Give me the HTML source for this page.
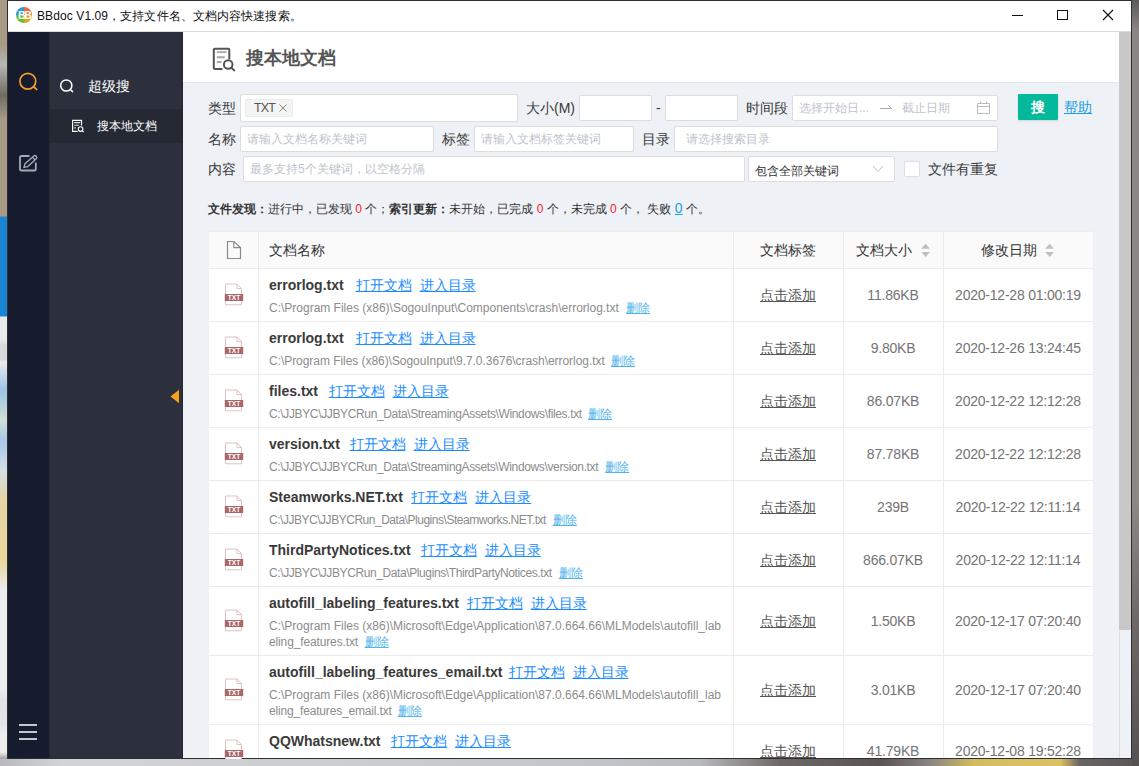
<!DOCTYPE html>
<html><head><meta charset="utf-8">
<style>
*{box-sizing:border-box;margin:0;padding:0}
html,body{width:1139px;height:766px;overflow:hidden}
body{position:relative;font-family:"Liberation Sans",sans-serif;color:#333;background:#8a8582}
.a{position:absolute}
.nw{white-space:nowrap}
/* desktop */
#dl{left:0;top:0;width:7px;height:766px;background:linear-gradient(180deg,#a89a87 0,#a89a87 45px,#b4b6b4 65px,#6f6d62 95px,#a89a87 120px,#a89a87 216px,#1a85d5 217px,#1a85d5 316px,#e8e9eb 317px,#e8e9eb 340px,#d8d9db 345px,#d8d9db 360px,#e9eaec 362px,#9cc3e6 390px,#cfe0d6 420px,#a8c8e8 440px,#d6dee6 470px,#e3d6a4 500px,#e8d69a 560px,#ecedee 590px,#ecedee 690px,#dfe3e8 700px,#e2e5e8 725px,#eeeeef 735px,#eeeeef 752px,#a9a9ab 758px,#9a9a9c 766px)}
#db{left:0;top:759px;width:1139px;height:7px;background:linear-gradient(90deg,#b9b9bd 0,#d2d3d7 60px,#cdced2 330px,#c2c4c9 600px,#b8b9bc 700px,#6d6865 780px,#5a5454 880px,#8a8482 930px,#d3be5e 975px,#d9c264 1060px,#6a6464 1080px,#5a5656 1139px)}
#dr{left:1132px;top:0;width:7px;height:766px;background:linear-gradient(180deg,#5d5a5c 0,#8b8583 30px,#8e8885 500px,#6e6866 620px,#575252 766px)}
/* window */
#win{left:7px;top:0;width:1125px;height:759px;background:#fff;border:1px solid #2f2f2f}
#title{left:8px;top:1px;width:1123px;height:31px;background:#fff;border-bottom:1px solid #dcdcdc}
#nav{left:8px;top:32px;width:40px;height:726px;background:#161b2e}
#side{left:48px;top:32px;width:135px;height:726px;background:linear-gradient(90deg,#1b1c24 0,#1b1c24 1px,#262830 1px,#262830 2px,#2b303c 2px,#2b303c 134px,#212431 134px)}
#main{left:183px;top:32px;width:936px;height:726px;background:#eef1f5}
#head{left:183px;top:32px;width:936px;height:50px;background:#fff}
#sb{left:1119px;top:32px;width:12px;height:726px;background:#eef1f5;border-left:1px solid #dedede}
#thumb{left:1119px;top:32px;width:12px;height:598px;background:#c8c8c8}
.lbl{font-size:14px;color:#3a3a3a;line-height:20px}
.inp{background:#fff;border:1px solid #dddddd;border-radius:2px}
.ph{font-size:12px;color:#c0c4cc;line-height:16px}
/* table */
#tbl{left:209px;top:232px;width:884px;height:526px;background:#fff}
.th{background:#fafafa}
.hl{height:1px;background:#ebebeb}
.vl{width:1px;background:#ebebeb}
.nm{font-size:14px;font-weight:bold;color:#3a3a3a;line-height:20px}
.lk{font-size:14px;color:#1a8cff;text-decoration:underline;line-height:20px}
.pt{font-size:12px;color:#8c8c8c;line-height:16px}
.del{color:#4db3ec;text-decoration:underline}
.tg{font-size:14px;color:#555;text-decoration:underline;line-height:20px;text-align:center;width:110px}
.sz{font-size:14px;letter-spacing:-0.2px;color:#747474;line-height:20px;text-align:center;width:100px}
.dt{font-size:14px;letter-spacing:-0.22px;color:#747474;line-height:20px;text-align:center;width:150px}
</style></head><body>
<div class="a" id="win"></div>
<div class="a" id="title"></div>
<div class="a" id="nav"></div>
<div class="a" id="side"></div>
<div class="a" id="main"></div>
<div class="a" id="head"></div>
<div class="a" style="left:183px;top:82px;width:936px;height:1px;background:#e5e8ec"></div>
<div class="a" id="sb"></div>
<div class="a" id="thumb"></div>

<!-- title bar -->
<svg class="a" style="left:15px;top:6px" width="18" height="18" viewBox="0 0 18 18">
 <path d="M9 9 L9 1 A8 8 0 0 0 1 9 Z" fill="#2d9bd2"/>
 <path d="M9 9 L17 9 A8 8 0 0 0 9 1 Z" fill="#f0673a"/>
 <path d="M9 9 L1 9 A8 8 0 0 0 9 17 Z" fill="#66c22e"/>
 <path d="M9 9 L9 17 A8 8 0 0 0 17 9 Z" fill="#dea21f"/>
 <text x="9.3" y="13" font-family="Liberation Sans" font-weight="bold" font-size="10.5" fill="#fff" text-anchor="middle" letter-spacing="-1.4">BB</text>
</svg>
<div class="a nw" style="left:37px;top:7px;font-size:12px;line-height:18px;color:#111;letter-spacing:0.1px">BBdoc V1.09，支持文件名、文档内容快速搜索。</div>
<div class="a" style="left:1012px;top:15px;width:11px;height:1px;background:#111"></div>
<div class="a" style="left:1057px;top:10px;width:11px;height:10px;border:1px solid #111"></div>
<svg class="a" style="left:1102px;top:9px" width="12" height="12" viewBox="0 0 12 12"><path d="M1 1 L11 11 M11 1 L1 11" stroke="#111" stroke-width="1.1"/></svg>
<!-- nav icons -->
<svg class="a" style="left:17px;top:70px" width="24" height="24" viewBox="0 0 24 24">
 <circle cx="10.8" cy="11.2" r="7.9" fill="none" stroke="#f3a02a" stroke-width="1.7"/>
 <path d="M16.6 16.8 L19.6 19.4" stroke="#f3a02a" stroke-width="1.8" stroke-linecap="round"/>
</svg>
<svg class="a" style="left:17px;top:153px" width="22" height="22" viewBox="0 0 22 22">
 <path d="M12.5 3 H4.6 Q3 3 3 4.6 V15.9 Q3 17.5 4.6 17.5 H17.2 Q18.8 17.5 18.8 15.9 V9.6" fill="none" stroke="#a7aab5" stroke-width="1.8"/>
 <g transform="translate(6.9 14.4) rotate(-42)"><path d="M0 0 L3.2 -1.9 H15 Q16.6 -1.9 16.6 0 Q16.6 1.9 15 1.9 H3.2 Z M13.2 -1.9 V1.9" fill="none" stroke="#a7aab5" stroke-width="1.4" stroke-linejoin="round"/></g>
</svg>
<div class="a" style="left:19px;top:724px;width:18px;height:2px;background:#c3c6cc"></div>
<div class="a" style="left:19px;top:731px;width:18px;height:2px;background:#c3c6cc"></div>
<div class="a" style="left:19px;top:738px;width:18px;height:2px;background:#c3c6cc"></div>
<!-- sidebar -->
<svg class="a" style="left:59px;top:78px" width="16" height="16" viewBox="0 0 16 16">
 <circle cx="7.3" cy="7.5" r="5.6" fill="none" stroke="#fff" stroke-width="1.5"/>
 <path d="M11.4 11.6 L13.6 13.6" stroke="#fff" stroke-width="1.5" stroke-linecap="round"/>
</svg>
<div class="a nw" style="left:88px;top:76px;font-size:14px;line-height:20px;color:#fff">超级搜</div>
<div class="a" style="left:50px;top:109px;width:132px;height:34px;background:#252933"></div>
<svg class="a" style="left:71px;top:118px" width="16" height="17" viewBox="0 0 16 17">
 <path d="M10.5 7.6 V2.3 H1.6 V13.4 H6.6" fill="none" stroke="#fff" stroke-width="1.2"/>
 <path d="M3.2 4.6 H9 M3.2 7.3 H8 M3.2 9.9 H5" stroke="#ddd" stroke-width="1.1"/>
 <circle cx="9.6" cy="11.1" r="2.3" fill="none" stroke="#fff" stroke-width="1.1"/>
 <path d="M11.3 12.8 L12.8 14.2" stroke="#fff" stroke-width="1.1"/>
</svg>
<div class="a nw" style="left:97px;top:118px;font-size:12px;line-height:16px;color:#fff">搜本地文档</div>
<svg class="a" style="left:169px;top:389px" width="11" height="15" viewBox="0 0 11 15"><path d="M1.5 7.5 L10 0.8 V14.2 Z" fill="#f8a01a"/></svg>
<!-- header -->
<svg class="a" style="left:211px;top:46px" width="26" height="26" viewBox="0 0 26 26">
 <path d="M18.3 13.2 V3.8 Q18.3 2.8 17.3 2.8 H3.8 Q2.8 2.8 2.8 3.8 V21.9 Q2.8 22.9 3.8 22.9 H11.5" fill="none" stroke="#555" stroke-width="2"/>
 <path d="M5.8 6.1 H15.6 M5.8 11.2 H13.8 M5.8 16 H10.6" stroke="#a8a8a8" stroke-width="1.9"/>
 <circle cx="17.2" cy="18.5" r="4.3" fill="none" stroke="#555" stroke-width="2"/>
 <path d="M20.4 21.7 L23.3 24.4" stroke="#555" stroke-width="2" stroke-linecap="round"/>
</svg>
<div class="a nw" style="left:246px;top:45px;font-size:18px;line-height:26px;font-weight:bold;color:#555">搜本地文档</div>

<div class="a" id="tbl"></div>
<!-- TABLE -->
<div class="a th" style="left:208px;top:231px;width:885px;height:37px;border-top:1px solid #ededed;border-left:1px solid #f0f0f0"></div>
<svg class="a" style="left:226px;top:240px" width="16" height="20" viewBox="0 0 16 20"><path d="M1.5 1.5 H7.8 L14.5 7.6 V18.5 H1.5 Z" fill="none" stroke="#8a8a8a" stroke-width="1.2"/><path d="M7.8 1.5 V7.6 H14.5" fill="none" stroke="#8a8a8a" stroke-width="1.1"/></svg>
<div class="a nw" style="left:269px;top:240px;font-size:14px;line-height:20px;color:#333">文档名称</div>
<div class="a nw" style="left:733px;top:240px;width:110px;text-align:center;font-size:14px;line-height:20px;color:#333">文档标签</div>
<div class="a nw" style="left:856px;top:240px;font-size:14px;line-height:20px;color:#333">文档大小</div>
<div class="a nw" style="left:981px;top:240px;font-size:14px;line-height:20px;color:#333">修改日期</div>
<svg class="a" style="left:921px;top:243px" width="10" height="15" viewBox="0 0 10 15"><path d="M0.2 5.8 L4.6 0.8 L9 5.8 Z M0.2 9 L4.6 14 L9 9 Z" fill="#bfbfbf"/></svg>
<svg class="a" style="left:1045px;top:243px" width="10" height="15" viewBox="0 0 10 15"><path d="M0.2 5.8 L4.6 0.8 L9 5.8 Z M0.2 9 L4.6 14 L9 9 Z" fill="#bfbfbf"/></svg>
<div class="a hl" style="left:209px;top:268px;width:884px"></div>
<svg class="a" style="left:224px;top:283px" width="20" height="23" viewBox="0 0 20 23"><path d="M1.5 1 H13 L17.5 5.6 V21.8 H1.5 Z" fill="#fff" stroke="#e0c2c2" stroke-width="1"/><path d="M13 1 V5.6 H17.5" fill="none" stroke="#e0c2c2" stroke-width="1"/><rect x="0.8" y="11" width="18.4" height="7" fill="#a9676a"/><text x="10" y="17.1" font-family="Liberation Sans" font-weight="bold" font-size="6.6" fill="#fff" text-anchor="middle">TXT</text></svg>
<div class="a nw nm" style="left:269px;top:275px">errorlog.txt</div>
<div class="a nw lk" style="left:355.6px;top:275px">打开文档</div>
<div class="a nw lk" style="left:419.6px;top:275px">进入目录</div>
<div class="a nw pt" style="left:269px;top:300px;letter-spacing:-0.006px">C:\Program Files (x86)\SogouInput\Components\crash\errorlog.txt</div>
<div class="a nw pt del" style="left:626.0px;top:300px">删除</div>
<div class="a nw tg" style="left:733px;top:285px">点击添加</div>
<div class="a nw sz" style="left:843px;top:285px">11.86KB</div>
<div class="a nw dt" style="left:943px;top:285px">2020-12-28 01:00:19</div>
<div class="a hl" style="left:209px;top:321px;width:884px"></div>
<svg class="a" style="left:224px;top:336px" width="20" height="23" viewBox="0 0 20 23"><path d="M1.5 1 H13 L17.5 5.6 V21.8 H1.5 Z" fill="#fff" stroke="#e0c2c2" stroke-width="1"/><path d="M13 1 V5.6 H17.5" fill="none" stroke="#e0c2c2" stroke-width="1"/><rect x="0.8" y="11" width="18.4" height="7" fill="#a9676a"/><text x="10" y="17.1" font-family="Liberation Sans" font-weight="bold" font-size="6.6" fill="#fff" text-anchor="middle">TXT</text></svg>
<div class="a nw nm" style="left:269px;top:328px">errorlog.txt</div>
<div class="a nw lk" style="left:355.6px;top:328px">打开文档</div>
<div class="a nw lk" style="left:419.6px;top:328px">进入目录</div>
<div class="a nw pt" style="left:269px;top:353px;letter-spacing:-0.050px">C:\Program Files (x86)\SogouInput\9.7.0.3676\crash\errorlog.txt</div>
<div class="a nw pt del" style="left:611.0px;top:353px">删除</div>
<div class="a nw tg" style="left:733px;top:338px">点击添加</div>
<div class="a nw sz" style="left:843px;top:338px">9.80KB</div>
<div class="a nw dt" style="left:943px;top:338px">2020-12-26 13:24:45</div>
<div class="a hl" style="left:209px;top:374px;width:884px"></div>
<svg class="a" style="left:224px;top:389px" width="20" height="23" viewBox="0 0 20 23"><path d="M1.5 1 H13 L17.5 5.6 V21.8 H1.5 Z" fill="#fff" stroke="#e0c2c2" stroke-width="1"/><path d="M13 1 V5.6 H17.5" fill="none" stroke="#e0c2c2" stroke-width="1"/><rect x="0.8" y="11" width="18.4" height="7" fill="#a9676a"/><text x="10" y="17.1" font-family="Liberation Sans" font-weight="bold" font-size="6.6" fill="#fff" text-anchor="middle">TXT</text></svg>
<div class="a nw nm" style="left:269px;top:381px">files.txt</div>
<div class="a nw lk" style="left:328.6px;top:381px">打开文档</div>
<div class="a nw lk" style="left:392.6px;top:381px">进入目录</div>
<div class="a nw pt" style="left:269px;top:406px;letter-spacing:-0.357px">C:\JJBYC\JJBYCRun_Data\StreamingAssets\Windows\files.txt</div>
<div class="a nw pt del" style="left:588.1px;top:406px">删除</div>
<div class="a nw tg" style="left:733px;top:391px">点击添加</div>
<div class="a nw sz" style="left:843px;top:391px">86.07KB</div>
<div class="a nw dt" style="left:943px;top:391px">2020-12-22 12:12:28</div>
<div class="a hl" style="left:209px;top:427px;width:884px"></div>
<svg class="a" style="left:224px;top:442px" width="20" height="23" viewBox="0 0 20 23"><path d="M1.5 1 H13 L17.5 5.6 V21.8 H1.5 Z" fill="#fff" stroke="#e0c2c2" stroke-width="1"/><path d="M13 1 V5.6 H17.5" fill="none" stroke="#e0c2c2" stroke-width="1"/><rect x="0.8" y="11" width="18.4" height="7" fill="#a9676a"/><text x="10" y="17.1" font-family="Liberation Sans" font-weight="bold" font-size="6.6" fill="#fff" text-anchor="middle">TXT</text></svg>
<div class="a nw nm" style="left:269px;top:434px">version.txt</div>
<div class="a nw lk" style="left:349.5px;top:434px">打开文档</div>
<div class="a nw lk" style="left:413.5px;top:434px">进入目录</div>
<div class="a nw pt" style="left:269px;top:459px;letter-spacing:-0.361px">C:\JJBYC\JJBYCRun_Data\StreamingAssets\Windows\version.txt</div>
<div class="a nw pt del" style="left:605.3px;top:459px">删除</div>
<div class="a nw tg" style="left:733px;top:444px">点击添加</div>
<div class="a nw sz" style="left:843px;top:444px">87.78KB</div>
<div class="a nw dt" style="left:943px;top:444px">2020-12-22 12:12:28</div>
<div class="a hl" style="left:209px;top:480px;width:884px"></div>
<svg class="a" style="left:224px;top:495px" width="20" height="23" viewBox="0 0 20 23"><path d="M1.5 1 H13 L17.5 5.6 V21.8 H1.5 Z" fill="#fff" stroke="#e0c2c2" stroke-width="1"/><path d="M13 1 V5.6 H17.5" fill="none" stroke="#e0c2c2" stroke-width="1"/><rect x="0.8" y="11" width="18.4" height="7" fill="#a9676a"/><text x="10" y="17.1" font-family="Liberation Sans" font-weight="bold" font-size="6.6" fill="#fff" text-anchor="middle">TXT</text></svg>
<div class="a nw nm" style="left:269px;top:487px">Steamworks.NET.txt</div>
<div class="a nw lk" style="left:411.2px;top:487px">打开文档</div>
<div class="a nw lk" style="left:475.2px;top:487px">进入目录</div>
<div class="a nw pt" style="left:269px;top:512px;letter-spacing:-0.474px">C:\JJBYC\JJBYCRun_Data\Plugins\Steamworks.NET.txt</div>
<div class="a nw pt del" style="left:552.9px;top:512px">删除</div>
<div class="a nw tg" style="left:733px;top:497px">点击添加</div>
<div class="a nw sz" style="left:843px;top:497px">239B</div>
<div class="a nw dt" style="left:943px;top:497px">2020-12-22 12:11:14</div>
<div class="a hl" style="left:209px;top:533px;width:884px"></div>
<svg class="a" style="left:224px;top:548px" width="20" height="23" viewBox="0 0 20 23"><path d="M1.5 1 H13 L17.5 5.6 V21.8 H1.5 Z" fill="#fff" stroke="#e0c2c2" stroke-width="1"/><path d="M13 1 V5.6 H17.5" fill="none" stroke="#e0c2c2" stroke-width="1"/><rect x="0.8" y="11" width="18.4" height="7" fill="#a9676a"/><text x="10" y="17.1" font-family="Liberation Sans" font-weight="bold" font-size="6.6" fill="#fff" text-anchor="middle">TXT</text></svg>
<div class="a nw nm" style="left:269px;top:540px">ThirdPartyNotices.txt</div>
<div class="a nw lk" style="left:420.9px;top:540px">打开文档</div>
<div class="a nw lk" style="left:484.9px;top:540px">进入目录</div>
<div class="a nw pt" style="left:269px;top:565px;letter-spacing:-0.399px">C:\JJBYC\JJBYCRun_Data\Plugins\ThirdPartyNotices.txt</div>
<div class="a nw pt del" style="left:558.8px;top:565px">删除</div>
<div class="a nw tg" style="left:733px;top:550px">点击添加</div>
<div class="a nw sz" style="left:843px;top:550px">866.07KB</div>
<div class="a nw dt" style="left:943px;top:550px">2020-12-22 12:11:14</div>
<div class="a hl" style="left:209px;top:586px;width:884px"></div>
<svg class="a" style="left:224px;top:609px" width="20" height="23" viewBox="0 0 20 23"><path d="M1.5 1 H13 L17.5 5.6 V21.8 H1.5 Z" fill="#fff" stroke="#e0c2c2" stroke-width="1"/><path d="M13 1 V5.6 H17.5" fill="none" stroke="#e0c2c2" stroke-width="1"/><rect x="0.8" y="11" width="18.4" height="7" fill="#a9676a"/><text x="10" y="17.1" font-family="Liberation Sans" font-weight="bold" font-size="6.6" fill="#fff" text-anchor="middle">TXT</text></svg>
<div class="a nw nm" style="left:269px;top:593px">autofill_labeling_features.txt</div>
<div class="a nw lk" style="left:466.7px;top:593px">打开文档</div>
<div class="a nw lk" style="left:530.7px;top:593px">进入目录</div>
<div class="a nw pt" style="left:269px;top:618px;letter-spacing:-0.003px">C:\Program Files (x86)\Microsoft\Edge\Application\87.0.664.66\MLModels\autofill_lab</div>
<div class="a nw pt" style="left:269px;top:634px;letter-spacing:-0.133px">eling_features.txt</div>
<div class="a nw pt del" style="left:364.7px;top:634px">删除</div>
<div class="a nw tg" style="left:733px;top:611px">点击添加</div>
<div class="a nw sz" style="left:843px;top:611px">1.50KB</div>
<div class="a nw dt" style="left:943px;top:611px">2020-12-17 07:20:40</div>
<div class="a hl" style="left:209px;top:655px;width:884px"></div>
<svg class="a" style="left:224px;top:678px" width="20" height="23" viewBox="0 0 20 23"><path d="M1.5 1 H13 L17.5 5.6 V21.8 H1.5 Z" fill="#fff" stroke="#e0c2c2" stroke-width="1"/><path d="M13 1 V5.6 H17.5" fill="none" stroke="#e0c2c2" stroke-width="1"/><rect x="0.8" y="11" width="18.4" height="7" fill="#a9676a"/><text x="10" y="17.1" font-family="Liberation Sans" font-weight="bold" font-size="6.6" fill="#fff" text-anchor="middle">TXT</text></svg>
<div class="a nw nm" style="left:269px;top:662px">autofill_labeling_features_email.txt</div>
<div class="a nw lk" style="left:508.5px;top:662px">打开文档</div>
<div class="a nw lk" style="left:572.5px;top:662px">进入目录</div>
<div class="a nw pt" style="left:269px;top:687px;letter-spacing:-0.003px">C:\Program Files (x86)\Microsoft\Edge\Application\87.0.664.66\MLModels\autofill_lab</div>
<div class="a nw pt" style="left:269px;top:703px;letter-spacing:-0.169px">eling_features_email.txt</div>
<div class="a nw pt del" style="left:398.0px;top:703px">删除</div>
<div class="a nw tg" style="left:733px;top:680px">点击添加</div>
<div class="a nw sz" style="left:843px;top:680px">3.01KB</div>
<div class="a nw dt" style="left:943px;top:680px">2020-12-17 07:20:40</div>
<div class="a hl" style="left:209px;top:724px;width:884px"></div>
<svg class="a" style="left:224px;top:739px" width="20" height="23" viewBox="0 0 20 23"><path d="M1.5 1 H13 L17.5 5.6 V21.8 H1.5 Z" fill="#fff" stroke="#e0c2c2" stroke-width="1"/><path d="M13 1 V5.6 H17.5" fill="none" stroke="#e0c2c2" stroke-width="1"/><rect x="0.8" y="11" width="18.4" height="7" fill="#a9676a"/><text x="10" y="17.1" font-family="Liberation Sans" font-weight="bold" font-size="6.6" fill="#fff" text-anchor="middle">TXT</text></svg>
<div class="a nw nm" style="left:269px;top:731px">QQWhatsnew.txt</div>
<div class="a nw lk" style="left:391.1px;top:731px">打开文档</div>
<div class="a nw lk" style="left:455.1px;top:731px">进入目录</div>
<div class="a nw tg" style="left:733px;top:741px">点击添加</div>
<div class="a nw sz" style="left:843px;top:741px">41.79KB</div>
<div class="a nw dt" style="left:943px;top:741px">2020-12-08 19:52:28</div>
<div class="a hl" style="left:209px;top:777px;width:884px"></div>
<div class="a vl" style="left:258px;top:232px;height:526px"></div>
<div class="a vl" style="left:733px;top:232px;height:526px"></div>
<div class="a vl" style="left:843px;top:232px;height:526px"></div>
<div class="a vl" style="left:943px;top:232px;height:526px"></div>
<!-- /TABLE -->
<!-- filters -->
<div class="a nw lbl" style="left:208px;top:98px">类型</div>
<div class="a inp" style="left:240px;top:94px;width:278px;height:28px"></div>
<div class="a" style="left:245px;top:99px;width:48px;height:18px;background:#f4f4f5;border:1px solid #ebebeb;border-radius:2px"></div>
<div class="a nw" style="left:254px;top:100px;font-size:12.5px;line-height:16px;color:#555;letter-spacing:-0.9px">TXT</div>
<svg class="a" style="left:278px;top:103px" width="10" height="10" viewBox="0 0 10 10"><path d="M1.5 1.5 L8.5 8.5 M8.5 1.5 L1.5 8.5" stroke="#888" stroke-width="1"/></svg>
<div class="a nw lbl" style="left:526px;top:98px">大小(M)</div>
<div class="a inp" style="left:579px;top:95px;width:73px;height:26px"></div>
<div class="a nw lbl" style="left:656px;top:98px">-</div>
<div class="a inp" style="left:665px;top:95px;width:73px;height:26px"></div>
<div class="a nw lbl" style="left:746px;top:98px">时间段</div>
<div class="a inp" style="left:792px;top:95px;width:206px;height:26px"></div>
<div class="a nw ph" style="left:799px;top:100px">选择开始日...</div>
<svg class="a" style="left:879px;top:103px" width="14" height="8" viewBox="0 0 14 8"><path d="M1 5.5 H12.5 L9.5 2.5" fill="none" stroke="#aaa" stroke-width="1"/></svg>
<div class="a nw ph" style="left:902px;top:100px">截止日期</div>
<svg class="a" style="left:976px;top:100px" width="15" height="15" viewBox="0 0 15 15"><path d="M1.5 3.5 H13.5 V13.5 H1.5 Z M1.5 6.5 H13.5 M4.5 1.5 V4 M10.5 1.5 V4" fill="none" stroke="#bbb" stroke-width="1"/></svg>
<div class="a" style="left:1018px;top:94px;width:40px;height:26px;background:#02b99c;border-radius:1px;box-shadow:0 1px 2px rgba(0,0,0,.12)"></div>
<div class="a nw" style="left:1031px;top:97px;font-size:14px;line-height:20px;color:#fff;font-weight:bold">搜</div>
<div class="a nw" style="left:1064px;top:97px;font-size:14px;line-height:20px;color:#199fe6;text-decoration:underline">帮助</div>

<div class="a nw lbl" style="left:208px;top:129px">名称</div>
<div class="a inp" style="left:240px;top:126px;width:194px;height:26px"></div>
<div class="a nw ph" style="left:247px;top:131px">请输入文档名称关键词</div>
<div class="a nw lbl" style="left:442px;top:129px">标签</div>
<div class="a inp" style="left:474px;top:126px;width:160px;height:26px"></div>
<div class="a nw ph" style="left:481px;top:131px">请输入文档标签关键词</div>
<div class="a nw lbl" style="left:642px;top:129px">目录</div>
<div class="a inp" style="left:674px;top:126px;width:324px;height:26px"></div>
<div class="a nw ph" style="left:686px;top:131px">请选择搜索目录</div>

<div class="a nw lbl" style="left:208px;top:159px">内容</div>
<div class="a inp" style="left:243px;top:156px;width:502px;height:26px"></div>
<div class="a nw ph" style="left:250px;top:161px">最多支持5个关键词，以空格分隔</div>
<div class="a inp" style="left:748px;top:156px;width:147px;height:26px"></div>
<div class="a nw" style="left:755px;top:163px;font-size:12px;line-height:16px;color:#333">包含全部关键词</div>
<svg class="a" style="left:872px;top:165px" width="12" height="8" viewBox="0 0 12 8"><path d="M1 1 L6 6.5 L11 1" fill="none" stroke="#bbb" stroke-width="1"/></svg>
<div class="a" style="left:904px;top:161px;width:16px;height:16px;background:#fff;border:1px solid #dcdfe6;border-radius:2px"></div>
<div class="a nw lbl" style="left:928px;top:159px">文件有重复</div>

<!-- status -->
<div class="a nw" style="left:208px;top:200px;font-size:12px;line-height:16px;color:#333"><b>文件发现：</b>进行中，已发现 <span style="color:#f5222d">0</span> 个；<b>索引更新：</b>未开始，已完成 <span style="color:#f5222d">0</span> 个，未完成 <span style="color:#f5222d">0</span> 个， 失败 <span style="color:#199fe6;text-decoration:underline;font-size:14px">0</span> 个。</div>
<div class="a" id="dl"></div>
<div class="a" id="db"></div>
<div class="a" id="dr"></div>
</body></html>
